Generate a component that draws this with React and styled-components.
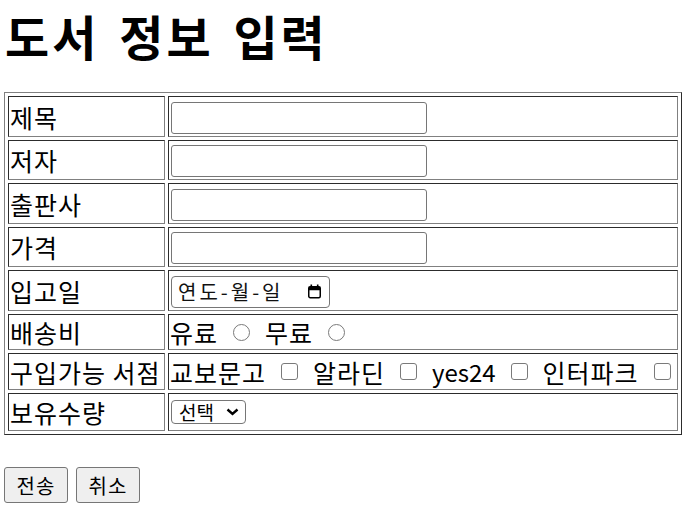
import React from 'react';
import styled, { createGlobalStyle } from 'styled-components';

const GlobalStyle = createGlobalStyle`
  html, body {
    margin: 0;
    padding: 0;
    background: #fff;
  }
  body {
    font-family: "Noto Sans CJK KR", "Noto Sans", sans-serif;
    color: #000;
  }
`;

const Page = styled.form`
  padding: 0 4px;
  font-size: 25px;
  letter-spacing: 1px;
`;

const Title = styled.h1`
  margin: 0 0 22px;
  font-size: 48px;
  line-height: 70px;
  font-weight: 700;
  letter-spacing: 3px;
  word-spacing: 6px;
  padding-left: 1px;
  white-space: nowrap;
`;

const Table = styled.table`
  border: 1px outset grey;
  border-spacing: 3px;
  border-collapse: separate;
`;

const Row = styled.tr`
  td, th {
    height: ${(p) => p.$h}px;
  }
`;

const Label = styled.th`
  box-sizing: border-box;
  width: 157px;
  border: 1px inset grey;
  padding: 1px;
  text-align: left;
  font-weight: 400;
  white-space: nowrap;
  line-height: 32px;
  vertical-align: middle;
`;

const Cell = styled.td`
  box-sizing: border-box;
  width: 510px;
  border: 1px inset grey;
  padding: 1px;
  vertical-align: middle;
  line-height: 32px;
`;

const TextInput = styled.input`
  display: block;
  box-sizing: border-box;
  width: 256px;
  height: 32px;
  margin: 2px 0 0 1px;
  border: 1px solid #767676;
  border-radius: 3px;
  background: #fff;
  font-family: inherit;
  font-size: 16px;
  padding: 0 4px;
`;

const DateBox = styled.div`
  box-sizing: border-box;
  display: flex;
  align-items: center;
  justify-content: space-between;
  width: 159px;
  height: 32px;
  margin: 2px 0 0 1px;
  padding: 0 7px 0 6px;
  border: 1px solid #767676;
  border-radius: 4px;
  background: #fff;
`;

const DateText = styled.span`
  font-size: 20px;
  line-height: 30px;
  letter-spacing: 3px;
  color: #111;
`;

const Options = styled.div`
  display: flex;
  align-items: center;
  gap: 15px;
  white-space: nowrap;
`;

const OptionText = styled.span`
  font-size: ${(p) => (p.$latin ? '24px' : 'inherit')};
  letter-spacing: ${(p) => (p.$latin ? '0' : 'inherit')};
`;

const Choice = styled.input`
  appearance: none;
  -webkit-appearance: none;
  box-sizing: border-box;
  width: 17px;
  min-width: 17px;
  height: 17px;
  margin: 0;
  flex: none;
  border: 1.6px solid #7a7a7a;
  border-radius: ${(p) => (p.type === 'radio' ? '50%' : '3px')};
  background: #fff;
`;

const SelectWrap = styled.div`
  position: relative;
  width: 75px;
  margin-left: 1px;
`;

const Select = styled.select`
  appearance: none;
  box-sizing: border-box;
  display: block;
  width: 75px;
  height: 24px;
  margin: 0;
  padding: 0 0 0 7px;
  border: 1px solid #767676;
  border-radius: 4px;
  background: #fff;
  color: #000;
  font-family: "Noto Sans CJK KR", sans-serif;
  font-size: 19px;
  line-height: 22px;
`;

const Chevron = styled.svg`
  position: absolute;
  right: 7px;
  top: 8px;
  pointer-events: none;
`;

const Buttons = styled.div`
  display: flex;
  gap: 8px;
  margin-top: 32px;
`;

const Button = styled.button`
  box-sizing: border-box;
  width: 64px;
  height: 36px;
  padding: 0;
  border: 1px solid #767676;
  border-radius: 3px;
  background: #efefef;
  color: #000;
  font-family: "Noto Sans CJK KR", sans-serif;
  font-size: 20px;
  letter-spacing: 1px;
`;

function CalendarIcon() {
  return (
    <svg width="15" height="15" viewBox="0 0 15 15">
      <rect x="1.75" y="2.75" width="11.5" height="11" rx="1.5" fill="none" stroke="#000" strokeWidth="1.5" />
      <rect x="1.75" y="2.75" width="11.5" height="3.5" fill="#000" />
      <rect x="3.5" y="0.5" width="1.6" height="2.5" fill="#000" />
      <rect x="9.9" y="0.5" width="1.6" height="2.5" fill="#000" />
    </svg>
  );
}

const stores = ['교보문고', '알라딘', 'yes24', '인터파크'];

export default function App() {
  return (
    <>
      <GlobalStyle />
      <Page onSubmit={(e) => e.preventDefault()}>
        <Title>도서 정보 입력</Title>
        <Table>
          <tbody>
            <Row $h={41}>
              <Label>제목</Label>
              <Cell><TextInput type="text" name="title" /></Cell>
            </Row>
            <Row $h={40}>
              <Label>저자</Label>
              <Cell><TextInput type="text" name="author" /></Cell>
            </Row>
            <Row $h={41}>
              <Label>출판사</Label>
              <Cell><TextInput type="text" name="publisher" /></Cell>
            </Row>
            <Row $h={40}>
              <Label>가격</Label>
              <Cell><TextInput type="text" name="price" /></Cell>
            </Row>
            <Row $h={41}>
              <Label>입고일</Label>
              <Cell>
                <DateBox>
                  <DateText>연도-월-일</DateText>
                  <CalendarIcon />
                </DateBox>
              </Cell>
            </Row>
            <Row $h={36}>
              <Label>배송비</Label>
              <Cell>
                <Options>
                  <OptionText>유료</OptionText>
                  <Choice type="radio" name="fee" value="paid" />
                  <OptionText>무료</OptionText>
                  <Choice type="radio" name="fee" value="free" />
                </Options>
              </Cell>
            </Row>
            <Row $h={37}>
              <Label>구입가능 서점</Label>
              <Cell>
                <Options>
                  {stores.map((s) => (
                    <React.Fragment key={s}>
                      <OptionText $latin={/^[a-z0-9]+$/i.test(s)}>{s}</OptionText>
                      <Choice type="checkbox" name="store" value={s} />
                    </React.Fragment>
                  ))}
                </Options>
              </Cell>
            </Row>
            <Row $h={38}>
              <Label>보유수량</Label>
              <Cell>
                <SelectWrap>
                  <Select name="stock" defaultValue="">
                    <option value="">선택</option>
                    <option value="1">1</option>
                    <option value="2">2</option>
                  </Select>
                  <Chevron width="13" height="8" viewBox="0 0 13 8">
                    <path d="M1.5 1.5 L6.5 6 L11.5 1.5" fill="none" stroke="#000" strokeWidth="2.4" />
                  </Chevron>
                </SelectWrap>
              </Cell>
            </Row>
          </tbody>
        </Table>
        <Buttons>
          <Button type="submit">전송</Button>
          <Button type="reset">취소</Button>
        </Buttons>
      </Page>
    </>
  );
}
